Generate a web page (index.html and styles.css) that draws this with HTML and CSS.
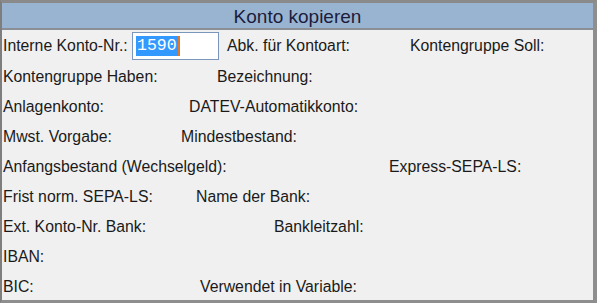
FILE: index.html
```html
<!DOCTYPE html>
<html lang="de">
<head>
<meta charset="utf-8">
<title>Konto kopieren</title>
<link rel="stylesheet" href="styles.css">
</head>
<body>
<div class="window">
  <div class="titlebar">Konto kopieren</div>
  <div class="form">
    <div class="row r1">
      <span>Interne Konto-Nr.:</span>
      <span class="input"><span class="sel">1590</span><span class="caret"></span></span>
      <span>Abk. für Kontoart:</span>
      <span>Kontengruppe Soll:</span>
    </div>
    <div class="row r2"><span>Kontengruppe Haben:</span><span>Bezeichnung:</span></div>
    <div class="row r3"><span>Anlagenkonto:</span><span>DATEV-Automatikkonto:</span></div>
    <div class="row r4"><span>Mwst. Vorgabe:</span><span>Mindestbestand:</span></div>
    <div class="row r5"><span>Anfangsbestand (Wechselgeld):</span><span>Express-SEPA-LS:</span></div>
    <div class="row r6"><span>Frist norm. SEPA-LS:</span><span>Name der Bank:</span></div>
    <div class="row r7"><span>Ext. Konto-Nr. Bank:</span><span>Bankleitzahl:</span></div>
    <div class="row r8"><span>IBAN:</span></div>
    <div class="row r9"><span>BIC:</span><span>Verwendet in Variable:</span></div>
  </div>
</div>
</body>
</html>
```
FILE: styles.css
```css
* { box-sizing: border-box; }
html, body { margin: 0; padding: 0; }
body {
  width: 597px;
  height: 303px;
  overflow: hidden;
  background: #8c8c8c;
  font-family: "Liberation Sans", Arial, sans-serif;
}
.window {
  width: 597px;
  height: 303px;
  border-top: 3px solid #8a8a8a;
  border-left: 2px solid #7e7e7e;
  border-right: 4px solid #8e8e8e;
  border-bottom: 3px solid #8e8e8e;
  background: #f0f0f0;
  display: flex;
  flex-direction: column;
  overflow: hidden;
}
.titlebar {
  height: 27px;
  flex: none;
  background: #99b4d1;
  border-bottom: 2px solid #8a8f96;
  color: #1c1c3c;
  font-size: 19px;
  line-height: 25px;
  text-align: center;
  padding-top: 1px;
}
.form {
  padding-left: 1px;
  color: #1a1a1a;
  font-size: 15.8px;
}
.row {
  display: grid;
  align-items: center;
  height: 30px;
  white-space: nowrap;
}
.r1 { height: 32px; grid-template-columns: 129px 87px 8px 183px auto; }
.r1 > span:nth-child(3) { grid-column: 4; }
.r1 > span:nth-child(4) { grid-column: 5; }
.r2 { grid-template-columns: 214px auto; }
.r3 { grid-template-columns: 186px auto; }
.r4 { grid-template-columns: 178px auto; }
.r5 { grid-template-columns: 386px auto; }
.r6 { grid-template-columns: 193px auto; }
.r7 { grid-template-columns: 271px auto; }
.r8 { grid-template-columns: auto; }
.r9 { grid-template-columns: 197px auto; }
.input {
  height: 28px;
  background: #fff;
  border: 1px solid #7a97bb;
  display: flex;
  align-items: center;
  padding-left: 3px;
}
.sel {
  background: #3399ff;
  color: #fff;
  font-family: "Liberation Mono", "DejaVu Sans Mono", monospace;
  font-size: 16.5px;
  line-height: 20px;
  padding: 0 1px;
}
.caret {
  width: 2px;
  height: 20px;
  background: #e07a2a;
}
```
